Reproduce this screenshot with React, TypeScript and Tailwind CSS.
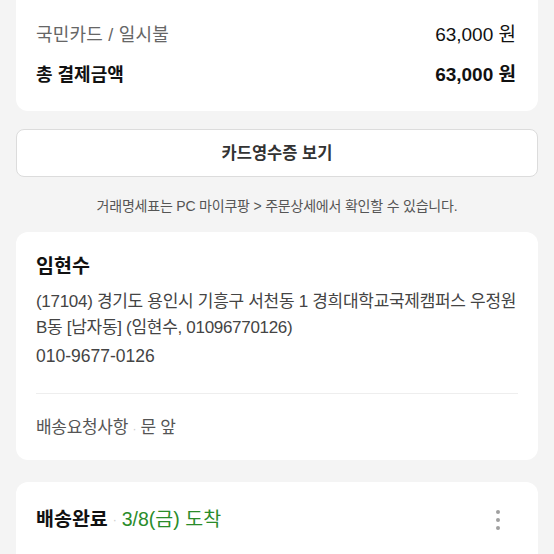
import React from 'react';

const font = { fontFamily: '"Liberation Sans", "Noto Sans CJK KR", sans-serif' };

export default function App() {
  return (
    <div className="w-[554px] h-[554px] overflow-hidden bg-[#f4f4f4] px-4" style={font}>
      <div className="bg-white rounded-b-xl px-5 pt-[21px] pb-[22px]">
        <div className="flex justify-between items-center h-7 text-[18px]">
          <span className="text-[#666] tracking-[0.2px]">국민카드 / 일시불</span>
          <span className="text-[#111] text-[19px] mr-[2px]">63,000 원</span>
        </div>
        <div className="flex justify-between items-center h-7 mt-3 text-[18px] font-bold text-[#111]">
          <span>총 결제금액</span>
          <span className="text-[19px] mr-[2px]">63,000 원</span>
        </div>
      </div>

      <button className="mt-[18px] w-full h-12 bg-white border border-[#dcdcdc] rounded-lg text-[16.5px] font-bold text-[#333]">
        카드영수증 보기
      </button>

      <p className="mt-[19px] text-center text-[14px] text-[#555] tracking-[-0.2px] leading-5">
        거래명세표는 PC 마이쿠팡 &gt; 주문상세에서 확인할 수 있습니다.
      </p>

      <div className="mt-[16px] bg-white rounded-xl">
        <div className="px-5 pt-5 pb-6">
          <h2 className="text-[19.5px] font-bold text-[#111] leading-7">임현수</h2>
          <p className="mt-[9px] text-[17px] leading-[26px] text-[#444] tracking-[-0.3px]">
            (17104) 경기도 용인시 기흥구 서천동 1 경희대학교국제캠퍼스 우정원 B동 [남자동] (임현수, 01096770126)
          </p>
          <p className="mt-[2px] text-[17.5px] leading-[26px] text-[#444]">010-9677-0126</p>
        </div>
        <div className="mx-5 h-px bg-[#eeeeee]" />
        <div className="px-5 pt-[21px] pb-[18px] text-[17px] leading-[26px] text-[#555] tracking-[-0.3px]">
          배송요청사항 <span className="text-[#ccc] text-[12px]">·</span> 문 앞
        </div>
      </div>

      <div className="mt-[22px] bg-white rounded-xl h-[100px] px-5 pt-[24px]">
        <div className="flex items-center justify-between h-7">
          <div className="flex items-center">
            <span className="font-bold text-[#111] text-[19.5px]">배송완료</span>
            <span className="text-[#ccc] text-[12px] mx-[5px]">·</span>
            <span className="text-[#2a8c2a] text-[19.5px]">3/8(금) 도착</span>
          </div>
          <div className="flex flex-col gap-[4px] mr-[18px]">
            <span className="w-1 h-1 rounded-full bg-[#a0a0a0]" />
            <span className="w-1 h-1 rounded-full bg-[#a0a0a0]" />
            <span className="w-1 h-1 rounded-full bg-[#a0a0a0]" />
          </div>
        </div>
      </div>
    </div>
  );
}
